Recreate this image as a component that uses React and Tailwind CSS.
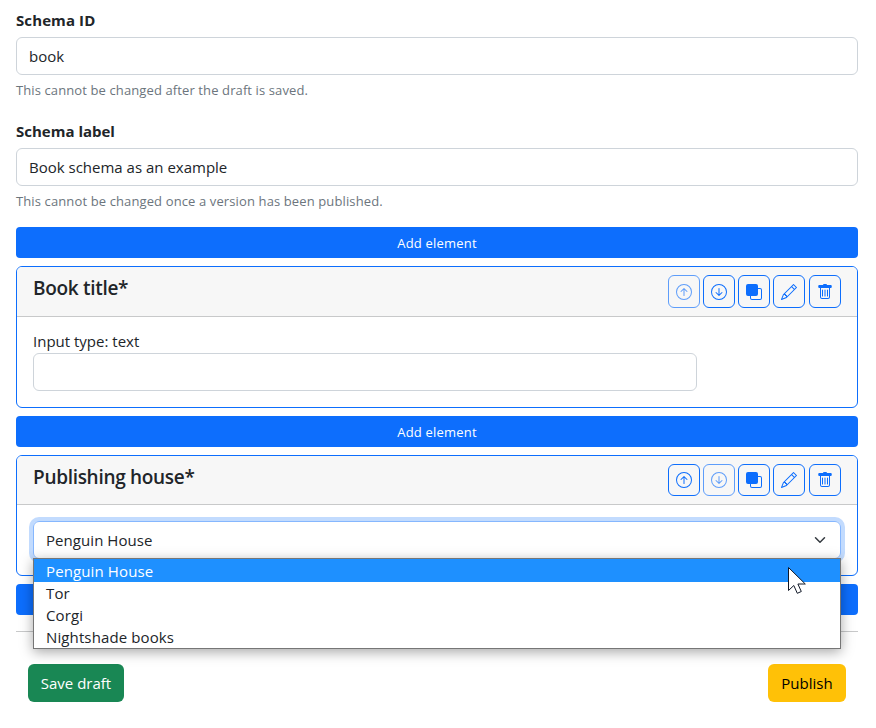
import { BsArrowUpCircle, BsArrowDownCircle, BsFront, BsPencil } from "react-icons/bs";

function TrashIcon() {
  return (
    <svg width="16" height="16" viewBox="0 0 16 16" fill="currentColor">
      <path d="M5.5 5.5A.5.5 0 0 1 6 6v6a.5.5 0 0 1-1 0V6a.5.5 0 0 1 .5-.5zm2.5 0a.5.5 0 0 1 .5.5v6a.5.5 0 0 1-1 0V6a.5.5 0 0 1 .5-.5zm3 .5a.5.5 0 0 0-1 0v6a.5.5 0 0 0 1 0V6z" />
      <path d="M14.5 3a1 1 0 0 1-1 1H13v9a2 2 0 0 1-2 2H5a2 2 0 0 1-2-2V4h-.5a1 1 0 0 1-1-1V2a1 1 0 0 1 1-1H6a1 1 0 0 1 1-1h2a1 1 0 0 1 1 1h3.5a1 1 0 0 1 1 1v1zM4.118 4 4 4.059V13a1 1 0 0 0 1 1h6a1 1 0 0 0 1-1V4.059L11.882 4H4.118z" />
      <rect x="1.5" y="1" width="13" height="3" rx="1" />
    </svg>
  );
}

function Field({ label, labelClass, value, help, helpClass }) {
  return (
    <div className="h-[111px]">
      <div className={`h-6 text-[15px] leading-6 font-bold ${labelClass}`}>{label}</div>
      <div className="mt-[5px] flex h-[38px] items-center rounded-md border border-[#ced4da] px-3">{value}</div>
      <div className={`mt-[5px] text-[13px] leading-[21px] text-[#6c757d] ${helpClass}`}>{help}</div>
    </div>
  );
}

function AddButton() {
  return (
    <button className="block h-[31px] w-full rounded-[4px] bg-[#0d6efd] text-center text-[13px] leading-[32px] tracking-[0.2px] text-white">
      Add element
    </button>
  );
}

function IconButton({ children, faded, className = "" }) {
  return (
    <button className={`flex w-8 items-center justify-center rounded-md border border-[#0d6efd] text-[#0d6efd] ${faded ? "opacity-65" : ""} ${className}`}>
      {children}
    </button>
  );
}

function Card({ title, titleClass, first, className, headerClass, toolsClass, children }) {
  return (
    <section className={`my-2 rounded-md border border-[#0d6efd] ${className}`}>
      <header className={`flex justify-between rounded-t-[5px] border-b border-[#c8c9ca] bg-[#f7f7f7] px-4 pt-2 ${headerClass}`}>
        <h5 className={`h-6 text-[19px] leading-[26px] font-semibold ${titleClass}`}>{title}</h5>
        <div className={`flex gap-[3px] ${toolsClass}`}>
          <IconButton faded={first}><BsArrowUpCircle size={16} /></IconButton>
          <IconButton faded={!first}><BsArrowDownCircle size={16} /></IconButton>
          <IconButton><BsFront size={16} /></IconButton>
          <IconButton><BsPencil size={16} /></IconButton>
          <IconButton className="ml-px"><TrashIcon /></IconButton>
        </div>
      </header>
      {children}
    </section>
  );
}

export default function App() {
  return (
    <main className="h-[728px] w-[876px] overflow-hidden bg-white px-4 pt-2 pr-[18px] font-['Open_Sans','Noto_Sans',sans-serif] text-[15px] text-[#212529]">
      <Field label="Schema ID" labelClass="tracking-[0.1px]" value="book" help="This cannot be changed after the draft is saved." helpClass="tracking-[0.11px]" />
      <Field label="Schema label" labelClass="tracking-[0px]" value="Book schema as an example" help="This cannot be changed once a version has been published." helpClass="tracking-[0.12px]" />
      <div className="-mt-[3px]">
        <AddButton />
        <Card title="Book title*" titleClass="tracking-[-0.3px]" first className="h-[142px]" headerClass="h-[50px]" toolsClass="h-[33px]">
          <div className="px-4 pt-[13px]">
            <div className="h-[23px] leading-[22px]">Input type: text</div>
            <div className="h-[38px] w-[664px] rounded-md border border-[#ced4da]" />
          </div>
        </Card>
        <AddButton />
        <Card title="Publishing house*" titleClass="tracking-[-0.3px]" first={false} className="h-[121px]" headerClass="h-[49px]" toolsClass="h-8">
          <div className="relative mx-4 mt-4">
            <div className="flex h-[38px] items-center justify-between rounded-md border border-[#86b7fe] pr-[14px] pl-3 shadow-[0_0_0_4px_#c2dbfe]">
              <span className="tracking-[0.06px]">Penguin House</span>
              <svg width="12" height="12" viewBox="0 0 16 16" fill="none" stroke="#343a40" strokeWidth="2" strokeLinecap="round" strokeLinejoin="round">
                <path d="m2 5 6 6 6-6" />
              </svg>
            </div>
            <div className="absolute top-[37px] left-0 z-10 h-[91px] w-full border border-[#767676] bg-white tracking-[0.12px] shadow-[0_3px_12px_rgba(0,0,0,0.35)]">
              <div className="h-[23px] bg-[#1e90ff] pl-3 leading-[25px] text-white">Penguin House</div>
              <div className="h-[22px] pl-3 leading-[23px]">Tor</div>
              <div className="h-[22px] pl-3 leading-[23px]">Corgi</div>
              <div className="h-[22px] pl-3 leading-[23px]">Nightshade books</div>
              <svg className="absolute top-[7px] left-[753px]" width="21" height="30" viewBox="0 0 21 30">
                <path d="M1.5 1.5v23l5.3-5 3.5 7.8 4-1.8-3.4-7.5h7.4z" fill="white" stroke="#111827" strokeWidth="1" />
              </svg>
            </div>
          </div>
        </Card>
        <AddButton />
        <hr className="mt-4 border-[#c8c9ca]" />
        <div className="mt-8 flex justify-between px-3">
          <button className="h-[38px] w-24 rounded-md bg-[#198754] text-white">Save draft</button>
          <button className="h-[38px] w-[78px] rounded-md bg-[#ffc107] text-black">Publish</button>
        </div>
      </div>
    </main>
  );
}
